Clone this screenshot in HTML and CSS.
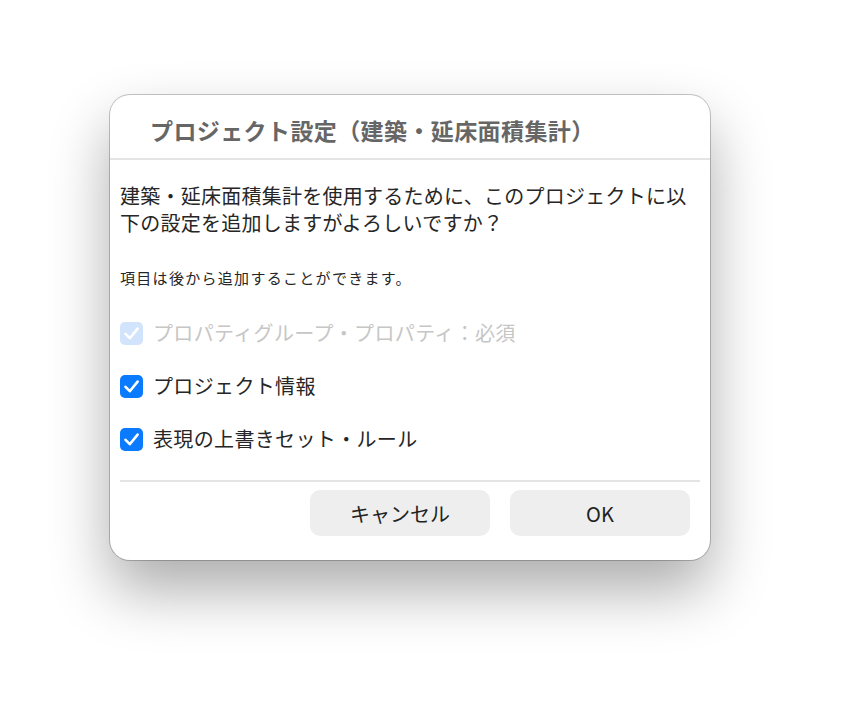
FILE: index.html
```html
<!DOCTYPE html>
<html lang="ja">
<head>
<meta charset="utf-8">
<title>プロジェクト設定</title>
<link rel="stylesheet" href="styles.css">
</head>
<body>
<div class="dialog">
  <div class="header">
    <h1 class="title">プロジェクト設定（建築・延床面積集計）</h1>
  </div>
  <div class="content">
    <p class="lead">建築・延床面積集計を使用するために、このプロジェクトに以下の設定を追加しますがよろしいですか？</p>
    <p class="note">項目は後から追加することができます。</p>
    <ul class="options">
      <li class="option disabled">
        <svg class="check" viewBox="0 0 23 23" width="23" height="23"><rect x="0" y="0" width="23" height="23" rx="5" fill="#d2e3fc"/><path d="M5.5 11.8 L9.8 16.2 L17.6 6.6" fill="none" stroke="#fff" stroke-width="2.6" stroke-linecap="round" stroke-linejoin="round"/></svg>
        <span>プロパティグループ・プロパティ：必須</span>
      </li>
      <li class="option">
        <svg class="check" viewBox="0 0 23 23" width="23" height="23"><rect x="0" y="0" width="23" height="23" rx="5" fill="#0a7aff"/><path d="M5.5 11.8 L9.8 16.2 L17.6 6.6" fill="none" stroke="#fff" stroke-width="2.6" stroke-linecap="round" stroke-linejoin="round"/></svg>
        <span>プロジェクト情報</span>
      </li>
      <li class="option">
        <svg class="check" viewBox="0 0 23 23" width="23" height="23"><rect x="0" y="0" width="23" height="23" rx="5" fill="#0a7aff"/><path d="M5.5 11.8 L9.8 16.2 L17.6 6.6" fill="none" stroke="#fff" stroke-width="2.6" stroke-linecap="round" stroke-linejoin="round"/></svg>
        <span>表現の上書きセット・ルール</span>
      </li>
    </ul>
  </div>
  <div class="footer">
    <button class="btn">キャンセル</button>
    <button class="btn">OK</button>
  </div>
</div>
</body>
</html>
```
FILE: styles.css
```css
* { box-sizing: border-box; }
html, body { margin: 0; padding: 0; background: #ffffff; }
body {
  font-family: "Noto Sans CJK JP", "Noto Sans", sans-serif;
  color: #262626;
  padding: 95px 0 0 110px;
  min-height: 726px;
}
.dialog {
  width: 600px;
  background: #fff;
  border-radius: 20px;
  box-shadow: 0 0 0 1px rgba(0,0,0,0.22), 0 30px 60px rgba(0,0,0,0.33);
  padding-bottom: 24px;
}
.header {
  padding: 19px 40px 12px;
  border-bottom: 2px solid #e4e4e4;
}
.title {
  margin: 0;
  font-size: 23px;
  line-height: 32px;
  font-weight: 700;
  letter-spacing: 0.4px;
  color: #666;
  white-space: nowrap;
}
.content {
  padding: 22px 10px 0;
}
.lead {
  margin: 0;
  font-size: 20px;
  line-height: 27px;
  letter-spacing: 0.25px;
}
.note {
  margin: 31px 0 0;
  font-size: 15px;
  line-height: 22px;
  letter-spacing: 1.3px;
}
.options {
  list-style: none;
  margin: 27px 0 0;
  padding: 0;
  display: flex;
  flex-direction: column;
  gap: 19px;
}
.option {
  display: flex;
  align-items: center;
  gap: 10px;
  height: 34px;
  font-size: 20px;
  line-height: 34px;
  letter-spacing: 0.35px;
}
.check { flex: none; display: block; }
.option.disabled span { color: #c6c6c6; }
.footer {
  margin: 24px 10px 0;
  border-top: 2px solid #e4e4e4;
  padding: 8px 10px 0 0;
  display: flex;
  justify-content: flex-end;
  gap: 20px;
}
.btn {
  width: 180px;
  height: 46px;
  border: none;
  border-radius: 10px;
  background: #eeeeee;
  font-family: "Noto Sans CJK JP", "Noto Sans", sans-serif;
  font-size: 20px;
  color: #222;
  padding: 0;
}
```
